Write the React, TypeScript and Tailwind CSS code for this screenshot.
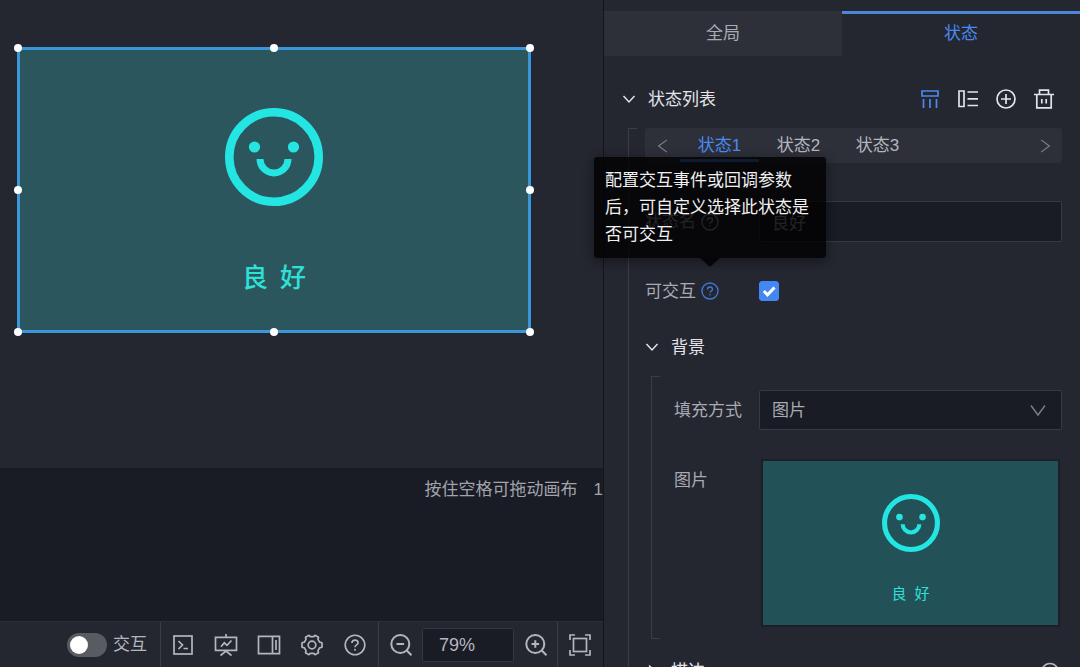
import React, { useState } from 'react';

const stateNames = ['状态1', '状态2', '状态3'];

const handlePositions = [
    '-left-[6px] -top-[6px]',
    'left-1/2 -translate-x-1/2 -top-[6px]',
    '-right-[6px] -top-[6px]',
    '-left-[6px] top-1/2 -translate-y-1/2',
    '-right-[6px] top-1/2 -translate-y-1/2',
    '-left-[6px] -bottom-[6px]',
    'left-1/2 -translate-x-1/2 -bottom-[6px]',
    '-right-[6px] -bottom-[6px]',
];

const Icon: React.FC<{ className?: string; children: React.ReactNode }> = ({ className = 'size-6', children }) => (
    <svg viewBox="0 0 24 24" fill="none" stroke="currentColor" strokeWidth="1.7" className={className} aria-hidden="true">
        {children}
    </svg>
);

const Chevron: React.FC<{ className?: string }> = ({ className = '' }) => (
    <svg viewBox="0 0 14 14" fill="none" stroke="currentColor" strokeWidth="1.5" className={className} aria-hidden="true">
        <path d="M1.500 4 7 10l5.500-6" />
    </svg>
);

// taller and thinner than Chevron, for the select and the tab arrows
const Arrow: React.FC<{ className?: string }> = ({ className = '' }) => (
    <svg viewBox="0 0 16 16" fill="none" stroke="currentColor" strokeWidth="1.400" className={className} aria-hidden="true">
        <path d="M1 3.500 8 13l7-9.500" />
    </svg>
);

const HelpIcon: React.FC<{ className?: string }> = ({ className = 'size-[18px]' }) => (
    <svg viewBox="0 0 20 20" fill="none" stroke="currentColor" strokeWidth="1.500" className={className} aria-hidden="true">
        <circle cx="10" cy="10" r="8.900" />
        <path d="M7.200 8.200c0-1.600 1.200-2.700 2.800-2.700s2.800 1.100 2.800 2.500c0 1.900-2.800 2-2.800 4" />
        <circle cx="10" cy="14.300" r=".9" fill="currentColor" stroke="none" />
    </svg>
);

const Smiley: React.FC<{ className?: string }> = ({ className }) => (
    <svg viewBox="0 0 98 98" fill="none" stroke="#23e5e2" className={className} aria-hidden="true">
        <circle cx="49" cy="49" r="44.700" strokeWidth="8.600" />
        <circle cx="29.500" cy="39" r="5.600" fill="#23e5e2" stroke="none" />
        <circle cx="68.500" cy="39" r="5.600" fill="#23e5e2" stroke="none" />
        <path d="M35 51a14 14 0 0 0 28 0" strokeWidth="7" />
    </svg>
);

const Group: React.FC<{ className?: string; children: React.ReactNode }> = ({ className = '', children }) => (
    <div className={`relative mt-[17px] ml-[6px] border-l border-[#3a3c46] ${className}`}>
        <span className="absolute left-0 top-0 h-px w-2 bg-[#3a3c46]" />
        <span className="absolute left-0 bottom-0 h-px w-2 bg-[#3a3c46]" />
        {children}
    </div>
);

const SectionTitle: React.FC<{ title: string; closed?: boolean }> = ({ title, closed }) => (
    <button type="button" className="flex h-6 items-center gap-3 text-[#e3e4e8]">
        <Chevron className={closed ? 'size-[14px] -rotate-90' : 'size-[14px]'} />
        <span className="pt-[2px]">{title}</span>
    </button>
);

const ToolButton: React.FC<{ label: string; children: React.ReactNode }> = ({ label, children }) => (
    <button type="button" aria-label={label} className="flex h-full w-[43px] items-center justify-center">
        {children}
    </button>
);

const Toolbar: React.FC = () => {
    const [interactive, setInteractive] = useState(false);
    const [zoom, setZoom] = useState('79%');

    return (
        <div className="flex h-[46px] shrink-0 justify-end border-t border-[#2b2d37] bg-[#242630] text-[#b4b6be]">
            <label className="flex items-center gap-[6px] pr-[13px]">
                <input
                    type="checkbox"
                    role="switch"
                    checked={interactive}
                    onChange={e => setInteractive(e.target.checked)}
                    className="h-6 w-10 appearance-none rounded-full bg-[#595b63] p-[3px] before:block before:size-[18px] before:rounded-full before:bg-white checked:bg-[#4387f5] checked:before:ml-4"
                />
                交互
            </label>
            <div className="flex border-l border-[#3a3c46] pr-[2px]">
                <ToolButton label="控制台">
                    <Icon>
                        <rect x="3" y="3" width="18" height="18" />
                        <path d="m7.500 8 4 4-4 4M12.500 15.500H17" />
                    </Icon>
                </ToolButton>
                <ToolButton label="演示">
                    <Icon>
                        <path d="M1.500 4.300h21v13h-21zM12 1v3.300M6.500 22.500l5.500-4.500 5.500 4.500M7 13.800l3.300-4 2.700 2.500 4.500-4.800" />
                    </Icon>
                </ToolButton>
                <ToolButton label="侧栏">
                    <Icon>
                        <path d="M1.500 3.300h21v17.400h-21zM15.500 3.300v17.400M19 7v10" />
                    </Icon>
                </ToolButton>
                <ToolButton label="设置">
                    <Icon>
                        <path
                            strokeLinejoin="round"
                            d="M9 2.300 10.300 3.600h3.400L15 2.300l3.500 2-.5 2 1.600 2.800 2.400.6v4.600l-2.400.6-1.600 2.800.5 2-3.500 2-1.300-1.300h-3.400L9 21.700l-3.500-2 .5-2-1.600-2.800-2.400-.6V9.700l2.400-.6L6 6.300l-.5-2z"
                        />
                        <circle cx="12" cy="12" r="3.800" />
                    </Icon>
                </ToolButton>
                <ToolButton label="帮助">
                    <HelpIcon className="size-[22px]" />
                </ToolButton>
            </div>
            <div className="flex items-center border-l border-[#3a3c46]">
                <ToolButton label="缩小">
                    <Icon>
                        <circle cx="11.300" cy="11" r="9" strokeWidth="2" />
                        <path d="M7.500 11h7.600M17.800 17.500l4.700 4.700" strokeWidth="2" />
                    </Icon>
                </ToolButton>
                <input
                    aria-label="缩放比例"
                    value={zoom}
                    onChange={e => setZoom(e.target.value)}
                    className="h-[34px] w-[92px] rounded-[2px] border border-[#343640] bg-[#191b25] px-4 pt-[2px] text-[18px]"
                />
                <ToolButton label="放大">
                    <Icon>
                        <circle cx="11.300" cy="11" r="9" strokeWidth="2" />
                        <path d="M7.500 11h7.600M11.300 7.200v7.600M17.800 17.500l4.700 4.700" strokeWidth="2" />
                    </Icon>
                </ToolButton>
            </div>
            <div className="border-l border-[#3a3c46] pr-[2px]">
                <ToolButton label="适应画布">
                    <Icon>
                        <rect x="5.500" y="5.500" width="13" height="13" />
                        <path d="M2 7V2h5M17 2h5v5M22 17v5h-5M7 22H2v-5" />
                    </Icon>
                </ToolButton>
            </div>
        </div>
    );
};

const Canvas: React.FC = () => (
    <main className="flex min-w-0 flex-1 flex-col overflow-hidden">
        <div className="h-[468px] shrink-0 bg-[#242630] pt-[47px] pl-[17px]">
            <div className="relative flex h-[286px] w-[514px] flex-col items-center border-[3px] border-[#3a97d9] bg-[#2c565e] pt-[58px]">
                <Smiley className="size-[98px]" />
                <p className="mt-[54px] flex gap-3 text-[26px] leading-9 font-medium text-[#2de0d8]">
                    <span>良</span>
                    <span>好</span>
                </p>
                {handlePositions.map(position => (
                    <span key={position} className={`absolute size-2 rounded-full bg-white ${position}`} />
                ))}
            </div>
        </div>
        <div className="flex flex-1 items-start justify-end gap-4 bg-[#191b25] pt-[10px] whitespace-nowrap text-[#a2a4ac]">
            <span>按住空格可拖动画布</span>
            <span>1</span>
        </div>
        <Toolbar />
    </main>
);

const StatePanel: React.FC = () => {
    const [active, setActive] = useState('状态1');
    const [name, setName] = useState('良好');
    const [clickable, setClickable] = useState(true);

    return (
        <aside className="relative z-10 w-[477px] shrink-0 border-l border-[#13151d] bg-[#242630] pt-[11px] text-[#a9abb3]">
            <div className="flex h-[45px]">
                <button type="button" className="flex-1 bg-[#2d2f39]">全局</button>
                <button type="button" className="flex-1 border-t-[3px] border-[#4a86dc] pb-[3px] text-[#4a8af0]">状态</button>
            </div>

            <div className="px-[18px] pt-[31px]">
                <div className="flex items-center justify-between pr-[6px]">
                    <SectionTitle title="状态列表" />
                    <div className="flex gap-[14px] text-[#e3e4e8]">
                        <button type="button" aria-label="横向排列" className="text-[#4a8af0]">
                            <Icon>
                                <path d="M4 4h16v5H4zM5.500 12v9M12 12v9M18.500 12v9" />
                            </Icon>
                        </button>
                        <button type="button" aria-label="纵向排列">
                            <Icon>
                                <path d="M3 4h5v15.500H3zM11.500 5H22M11.500 11.800H22M11.500 18.500H22" />
                            </Icon>
                        </button>
                        <button type="button" aria-label="新增状态">
                            <Icon>
                                <circle cx="12" cy="12" r="9" />
                                <path d="M7 12h10M12 7v10" />
                            </Icon>
                        </button>
                        <button type="button" aria-label="删除状态">
                            <Icon>
                                <path d="M2 7.500h20M7.500 7.500V3.200h9v4.300M4.800 7.500v13.300h14.400V7.500M9.800 12v4.500M14.200 12v4.500" />
                            </Icon>
                        </button>
                    </div>
                </div>

                <Group className="pl-4">
                    <div className="flex h-[35px] items-center rounded-[3px] bg-[#2d2f39] text-[#b4b6be]">
                        <button type="button" aria-label="上一个" className="flex w-[35px] justify-center text-[#7d7f87]">
                            <Arrow className="size-[14px] rotate-90" />
                        </button>
                        {stateNames.map(state => (
                            <button
                                key={state}
                                type="button"
                                onClick={() => setActive(state)}
                                className={`h-[33px] w-[79px] border-b-[3px] pt-[3px] ${
                                    state === active ? 'border-[#4387f5] text-[#4a8af0]' : 'border-transparent'
                                }`}
                            >
                                {state}
                            </button>
                        ))}
                        <button type="button" aria-label="下一个" className="ml-auto flex w-[35px] justify-center text-[#7d7f87]">
                            <Arrow className="size-[14px] -rotate-90" />
                        </button>
                    </div>

                    <div className="mt-[38px] flex items-center">
                        <label htmlFor="state-name" className="flex w-[114px] items-center gap-[5px]">
                            状态名
                            <HelpIcon />
                        </label>
                        <input
                            id="state-name"
                            value={name}
                            onChange={e => setName(e.target.value)}
                            className="h-[41px] min-w-0 flex-1 rounded-[2px] border border-[#373943] bg-[#191b25] px-3"
                        />
                    </div>

                    <div className="mt-[39px] flex h-5 items-center">
                        <div className="flex w-[114px] items-center gap-[5px]">
                            <label htmlFor="clickable" className="pt-[2px]">可交互</label>
                            <button type="button" aria-describedby="clickable-tip" aria-label="说明" className="relative text-[#3f78d0]">
                                <HelpIcon />
                                <span
                                    id="clickable-tip"
                                    role="tooltip"
                                    className="absolute bottom-full left-1/2 mb-6 w-[232px] -translate-x-1/2 rounded-[3px] bg-black/80 px-[11px] py-[10px] text-left leading-[27px] text-[#f0f0f2] shadow-[0_3px_12px_rgba(0,0,0,0.4)]"
                                >
                                    配置交互事件或回调参数后，可自定义选择此状态是否可交互
                                    <span className="absolute top-full left-1/2 -translate-x-1/2 border-x-[10px] border-t-[9px] border-x-transparent border-t-black/80" />
                                </span>
                            </button>
                        </div>
                        <span className="relative flex size-5">
                            <input
                                id="clickable"
                                type="checkbox"
                                checked={clickable}
                                onChange={e => setClickable(e.target.checked)}
                                className="peer size-5 appearance-none rounded-[3px] border border-[#4387f5] checked:bg-[#4387f5]"
                            />
                            <svg
                                viewBox="0 0 20 20"
                                fill="none"
                                stroke="#fff"
                                strokeWidth="3"
                                className="pointer-events-none absolute inset-0 hidden peer-checked:block"
                                aria-hidden="true"
                            >
                                <path d="m4.800 10 3.700 3.800 7-7.300" />
                            </svg>
                        </span>
                    </div>

                    <div className="mt-[34px]">
                        <SectionTitle title="背景" />
                    </div>
                    <Group className="pt-[14px] pb-[10px] pl-[22px]">
                        <div className="flex items-center">
                            <label htmlFor="fill-mode" className="w-[85px] pt-[2px]">填充方式</label>
                            <div className="relative flex-1">
                                <select
                                    id="fill-mode"
                                    className="block h-10 w-full appearance-none rounded-[2px] border border-[#373943] bg-[#191b25] px-3 pt-[2px]"
                                >
                                    <option>图片</option>
                                    <option>颜色</option>
                                </select>
                                <Arrow className="pointer-events-none absolute top-3 right-4 size-4 text-[#7d7f87]" />
                            </div>
                        </div>
                        <div className="mt-[27px] flex items-start">
                            <span className="mt-3 w-[85px]">图片</span>
                            <div className="flex-1 p-1">
                                <div className="flex h-[164px] flex-col items-center bg-[#235158] pt-[33px] shadow-[0_0_0_2px_#1c1f29]">
                                    <Smiley className="size-[58px]" />
                                    <p className="mt-[30px] flex gap-2 text-[15px] leading-6 text-[#2de0d8]">
                                        <span>良</span>
                                        <span>好</span>
                                    </p>
                                </div>
                            </div>
                        </div>
                    </Group>

                    <div className="mt-5 flex items-center justify-between text-[#b4b6be]">
                        <SectionTitle title="描边" closed />
                        <button type="button" aria-label="显示描边">
                            <Icon>
                                <path d="M3 12c2-5 5-7.500 9-7.500s7 2.500 9 7.500c-2 5-5 7.500-9 7.500S5 17 3 12z" />
                                <circle cx="12" cy="12" r="3.500" />
                            </Icon>
                        </button>
                    </div>
                </Group>
            </div>
        </aside>
    );
};

const App: React.FC = () => {
    return (
        <div className="flex h-screen overflow-hidden bg-[#242630] font-['Liberation_Sans','Noto_Sans_CJK_SC',sans-serif] text-[17px] leading-6">
            <Canvas />
            <StatePanel />
        </div>
    );
};

export default App;
